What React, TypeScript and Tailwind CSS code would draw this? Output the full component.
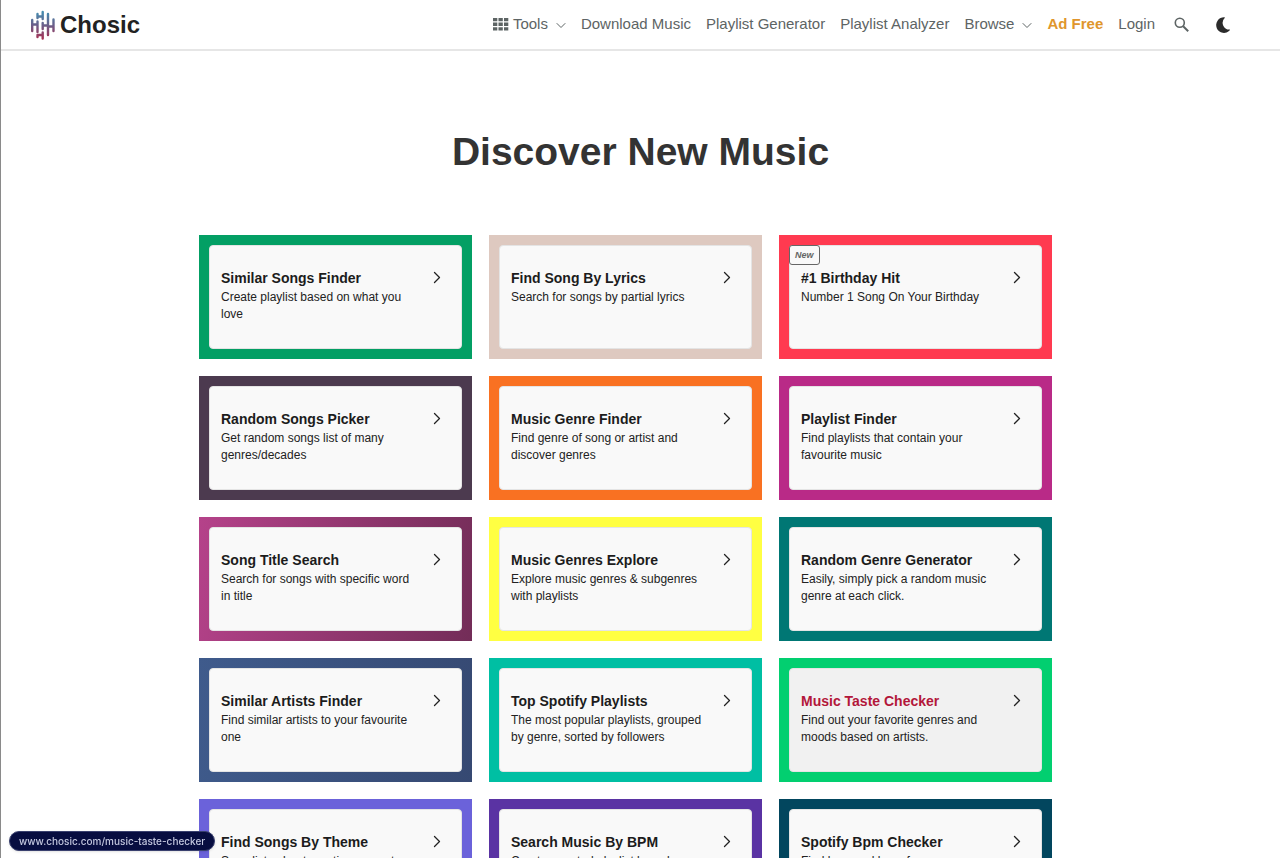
interface Tool {
  title: string;
  text: string;
  frame: string;
  isNew?: boolean;
  active?: boolean;
}

const tools: Tool[] = [
  { title: 'Similar Songs Finder', text: 'Create playlist based on what you love', frame: 'bg-[#039f64]' },
  { title: 'Find Song By Lyrics', text: 'Search for songs by partial lyrics', frame: 'bg-[#dec9c0]' },
  { title: '#1 Birthday Hit', text: 'Number 1 Song On Your Birthday', frame: 'bg-[#ff3a50]', isNew: true },
  { title: 'Random Songs Picker', text: 'Get random songs list of many genres/decades', frame: 'bg-[#4c3a4f]' },
  { title: 'Music Genre Finder', text: 'Find genre of song or artist and discover genres', frame: 'bg-[#f97122]' },
  { title: 'Playlist Finder', text: 'Find playlists that contain your favourite music', frame: 'bg-[#b92a87]' },
  {
    title: 'Song Title Search',
    text: 'Search for songs with specific word in title',
    frame: 'bg-linear-100 from-[#b5428a] to-[#732d58]',
  },
  { title: 'Music Genres Explore', text: 'Explore music genres & subgenres with playlists', frame: 'bg-[#ffff42]' },
  { title: 'Random Genre Generator', text: 'Easily, simply pick a random music genre at each click.', frame: 'bg-[#007774]' },
  {
    title: 'Similar Artists Finder',
    text: 'Find similar artists to your favourite one',
    frame: 'bg-linear-100 from-[#3f5b8c] to-[#364972]',
  },
  { title: 'Top Spotify Playlists', text: 'The most popular playlists, grouped by genre, sorted by followers', frame: 'bg-[#00bfa3]' },
  { title: 'Music Taste Checker', text: 'Find out your favorite genres and moods based on artists.', frame: 'bg-[#02cf70]', active: true },
  { title: 'Find Songs By Theme', text: 'Song lists about emotions, events, topics and more', frame: 'bg-[#6b62da]' },
  { title: 'Search Music By BPM', text: 'Create a sorted playlist based on tempo', frame: 'bg-[#5a33a3]' },
  { title: 'Spotify Bpm Checker', text: 'Find bpm and key of any song', frame: 'bg-[#02465e]' },
];

function Logo() {
  return (
    <svg className="h-[30px] w-[26px]" viewBox="0 0 26 30" fill="none" aria-hidden="true">
      <defs>
        <linearGradient id="logo" x1="0" y1="0" x2="0" y2="30" gradientUnits="userSpaceOnUse">
          <stop offset="0" stopColor="#3f93b5" />
          <stop offset="0.5" stopColor="#6a5f8a" />
          <stop offset="1" stopColor="#ab2d4f" />
        </linearGradient>
      </defs>
      <path
        stroke="url(#logo)"
        strokeWidth="2.4"
        strokeLinecap="round"
        d="M2.200 10v11M2.200 14.500h5M7.500 11.500v10.500M7.500 4v4M7.500 6.500h5M12.700 2v7M12.700 13v6M12.700 15.500h5M18 4v21M18 16.500h5.500M23.500 9.500v11.500M7.500 25.500v1.500M7.500 25h5M12.700 22.500v6"
      />
    </svg>
  );
}

function ChevronDown() {
  return (
    <svg className="h-2.5 w-2.5" viewBox="0 0 10 10" fill="none" stroke="currentColor" aria-hidden="true">
      <path strokeLinecap="round" strokeLinejoin="round" d="M1 3.500l4 4 4-4" />
    </svg>
  );
}

function Header() {
  return (
    <header className="flex items-center justify-between border-b-2 border-[#e6e6e6] pl-[29px] pr-[49px]">
      <a href="#" className="flex h-[49px] items-center gap-1 text-2xl font-bold text-[#222]">
        <Logo />
        Chosic
      </a>

      <nav className="flex items-center gap-[15px] text-[15px] text-[#5d6464]">
        <button className="flex items-center">
          <svg className="mr-1 h-[15px] w-4" viewBox="0 0 16 15" fill="currentColor" aria-hidden="true">
            <path d="M0 1h4.300v3.300H0zM5.500 1h4.300v3.300H5.500zM11 1h4.300v3.300H11zM0 5.600h4.300v3.300H0zM5.500 5.600h4.300v3.300H5.500zM11 5.600h4.300v3.300H11zM0 10.200h4.300v3.300H0zM5.500 10.200h4.300v3.300H5.500zM11 10.200h4.300v3.300H11z" />
          </svg>
          <span className="mr-2">Tools</span>
          <ChevronDown />
        </button>
        <a href="#">Download Music</a>
        <a href="#">Playlist Generator</a>
        <a href="#">Playlist Analyzer</a>
        <button className="flex items-center gap-2">
          Browse
          <ChevronDown />
        </button>
        <a href="#" className="font-bold text-[#e0962d]">
          Ad Free
        </a>
        <a href="#">Login</a>
        <button className="ml-1" aria-label="Search">
          <svg className="h-4 w-4" viewBox="0 0 16 16" fill="none" stroke="currentColor" strokeWidth="1.600">
            <circle cx="5.800" cy="5.800" r="4.500" />
            <path strokeWidth="2" d="M9.200 9.200l5 5" />
          </svg>
        </button>
        <button className="ml-2.5 text-[#2b2b2b]" aria-label="Dark mode">
          <svg className="h-4 w-4" viewBox="0 0 16 16" fill="currentColor">
            <path d="M9.300 0.300A7.800 7.800 0 1 0 14.800 13.300c.3-.4 0-.8-.4-.7A6.700 6.700 0 0 1 9.700 1.100c.4-.3.200-.8-.4-.8z" />
          </svg>
        </button>
      </nav>
    </header>
  );
}

function ToolCard({ tool }: { tool: Tool }) {
  return (
    <a href="#" className={`flex min-h-[124px] p-2.5 ${tool.frame}`}>
      <div
        className={`relative flex flex-1 items-start gap-3 rounded border border-[#e4e4e4] px-[11px] pt-[22px] ${
          tool.active ? 'bg-[#f1f1f1]' : 'bg-[#f9f9f9]'
        }`}
      >
        {tool.isNew && (
          <span className="absolute -left-px -top-px rounded-[3px] border border-[#666] bg-[#f9f9f9] px-[5px] text-[9px] font-bold italic leading-[18px] text-[#666]">
            New
          </span>
        )}
        <div className="flex-1">
          <h2 className={`text-sm font-bold ${tool.active ? 'text-[#b3173a]' : 'text-[#1c1c1c]'}`}>{tool.title}</h2>
          <p className="mt-px text-xs leading-[17px] text-[#222]">{tool.text}</p>
        </div>
        <svg className="mr-[5px] mt-px h-4 w-4 text-[#222]" viewBox="0 0 16 16" fill="none" stroke="currentColor" aria-hidden="true">
          <path strokeWidth="1.300" strokeLinecap="round" strokeLinejoin="round" d="M5.500 3.500l5 5-5 5" />
        </svg>
      </div>
    </a>
  );
}

export default function App() {
  return (
    <div className="min-h-screen border-l border-[#8a8a8a] bg-white font-['Liberation_Sans',Arial,sans-serif]">
      <Header />

      <main className="pb-16 pt-[77px]">
        <h1 className="mb-[59px] text-center text-[39px] font-bold leading-[48px] text-[#333]">Discover New Music</h1>

        <div className="mx-auto grid max-w-[883px] grid-cols-3 gap-[17px] pr-[30px]">
          {tools.map((tool) => (
            <ToolCard key={tool.title} tool={tool} />
          ))}
        </div>
      </main>

      {/* Link target of the hovered card */}
      <div className="fixed bottom-[7px] left-[9px] rounded-full border border-[#39406e] bg-[#070d40] px-[9px] font-[Inter,sans-serif] text-[10px] font-medium leading-[18px] text-[#c3c7de] shadow">
        www.chosic.com/music-taste-checker
      </div>
    </div>
  );
}
